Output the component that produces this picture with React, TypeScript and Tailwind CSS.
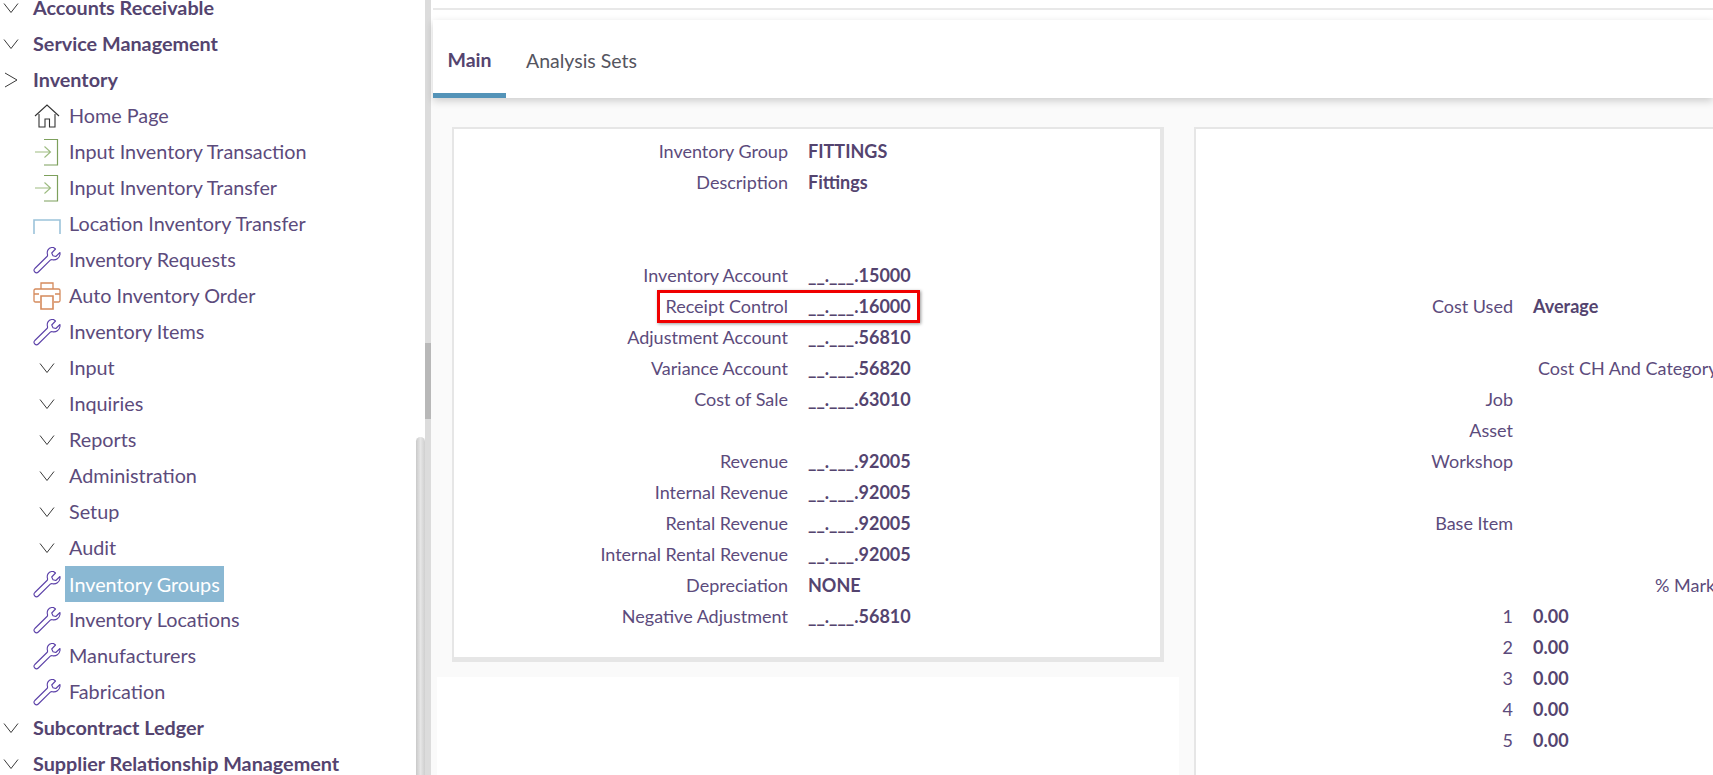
const purple = "text-[#5c4b7c]";

function Chevron({ open = true }: { open?: boolean }) {
  return (
    <svg width="16" height="16" viewBox="0 0 16 16" fill="none" stroke="#3a3a3a" strokeWidth="1">
      {open ? <path d="M1 3.500 L8 12.500 L15 3.500" /> : <path d="M2 1 L14 8 L2 15" />}
    </svg>
  );
}

function HomeIcon() {
  return (
    <svg width="28" height="28" viewBox="0 0 28 28" fill="none" stroke="#333" strokeWidth="1.100">
      <path d="M2 14 L14 3 L26 14 M6 12 V25 H12 V17 H16.500 V25 H22 V12" />
    </svg>
  );
}

function InputIcon() {
  return (
    <svg width="28" height="28" viewBox="0 0 28 28" fill="none">
      <path d="M11 1.500 H24.500 V27 H11" stroke="#7da05c" strokeWidth="1.200" />
      <path d="M2 14 H17 M11.500 8.500 L17.500 14 L11.500 19.500" stroke="#9dbb80" strokeWidth="1.100" />
    </svg>
  );
}

function LocationIcon() {
  return (
    <svg width="28" height="28" viewBox="0 0 28 28" fill="none" className="self-start mt-[13px]">
      <path d="M1 15 V1 H27 V15" stroke="#9cc3da" strokeWidth="1.600" />
    </svg>
  );
}

function WrenchIcon() {
  return (
    <svg width="28" height="28" viewBox="0 0 28 28" fill="none" stroke="#5b40a8" strokeWidth="1.100" strokeLinejoin="round">
      <path d="M18.500 1.500 C15.500 2 13.500 5 14.500 8.500 C14.700 9.300 14.500 10 14 10.500 L1.800 22.500 C0.700 23.700 0.800 25 1.800 26 C2.800 27 4.200 27.100 5.300 26 L17.300 14.200 C18 13.600 18.700 13.500 19.500 13.700 C23 14.500 26.500 12 27 8.500 L27 6.500 L22.800 10.500 L20 9.800 L18.700 7 L22.500 3 L20.500 1.500 Z" />
    </svg>
  );
}

function PrinterIcon() {
  return (
    <svg width="28" height="28" viewBox="0 0 28 28" fill="none" stroke="#d58a5c" strokeWidth="1.300">
      <path d="M8 7 V1 H20 V7" />
      <path d="M7 20 H2.500 C1.500 20 1 19.500 1 18.500 V8.500 C1 7.500 1.500 7 2.500 7 H25.500 C26.500 7 27 7.500 27 8.500 V18.500 C27 19.500 26.500 20 25.500 20 H21" />
      <path d="M1 12 H6 M22 12 H27" />
      <path d="M8 14 H20 V27 H8 Z" strokeWidth="1.600" />
    </svg>
  );
}

type NavRow = { label: string; icon: React.ReactNode; top?: boolean; active?: boolean };

const wrench = <WrenchIcon />;
const chevron = <Chevron />;

const navRows: NavRow[] = [
  { label: "Accounts Receivable", icon: chevron, top: true },
  { label: "Service Management", icon: chevron, top: true },
  { label: "Inventory", icon: <Chevron open={false} />, top: true },
  { label: "Home Page", icon: <HomeIcon /> },
  { label: "Input Inventory Transaction", icon: <InputIcon /> },
  { label: "Input Inventory Transfer", icon: <InputIcon /> },
  { label: "Location Inventory Transfer", icon: <LocationIcon /> },
  { label: "Inventory Requests", icon: wrench },
  { label: "Auto Inventory Order", icon: <PrinterIcon /> },
  { label: "Inventory Items", icon: wrench },
  { label: "Input", icon: chevron },
  { label: "Inquiries", icon: chevron },
  { label: "Reports", icon: chevron },
  { label: "Administration", icon: chevron },
  { label: "Setup", icon: chevron },
  { label: "Audit", icon: chevron },
  { label: "Inventory Groups", icon: wrench, active: true },
  { label: "Inventory Locations", icon: wrench },
  { label: "Manufacturers", icon: wrench },
  { label: "Fabrication", icon: wrench },
  { label: "Subcontract Ledger", icon: chevron, top: true },
  { label: "Supplier Relationship Management", icon: chevron, top: true },
];

function Sidebar() {
  return (
    <aside className="flex w-[431px] shrink-0 h-full overflow-hidden bg-white">
      <nav className="w-[416px] shrink-0 -mt-[10px]">
        {navRows.map((r) => (
          <div key={r.label} className="flex items-center h-9">
            {r.top ? (
              <>
                <span className="w-[33px] pl-[3px] flex items-center">{r.icon}</span>
                <span className="font-bold text-[19.800px] text-[#54446f] whitespace-nowrap">{r.label}</span>
              </>
            ) : (
              <>
                <span className="w-[65px] pl-[33px] pr-[4px] h-full flex items-center justify-center shrink-0">{r.icon}</span>
                <span
                  className={
                    r.active
                      ? "h-9 leading-9 px-[4px] bg-[#8ab8d3] text-white text-[19.800px] whitespace-nowrap"
                      : `px-[4px] text-[19.800px] ${purple} whitespace-nowrap`
                  }
                >
                  {r.label}
                </span>
              </>
            )}
          </div>
        ))}
      </nav>
      <div className="w-[9px] shrink-0 mt-[437px] rounded-t-[5px] bg-gradient-to-r from-[#c9c9c9] via-[#e6e6e6] to-[#cfcfcf]" />
      <div className="w-[6px] shrink-0 h-full bg-[#dcdcdc] pt-[343px]">
        <div className="h-[76px] bg-[#b8b8b8]" />
      </div>
    </aside>
  );
}

type Field = { label?: string; value?: string; plainClass?: string };

const leftFields: Field[] = [
  { label: "Inventory Group", value: "FITTINGS" },
  { label: "Description", value: "Fittings" },
  {},
  {},
  { label: "Inventory Account", value: "__.___.15000" },
  { label: "Receipt Control", value: "__.___.16000" },
  { label: "Adjustment Account", value: "__.___.56810" },
  { label: "Variance Account", value: "__.___.56820" },
  { label: "Cost of Sale", value: "__.___.63010" },
  {},
  { label: "Revenue", value: "__.___.92005" },
  { label: "Internal Revenue", value: "__.___.92005" },
  { label: "Rental Revenue", value: "__.___.92005" },
  { label: "Internal Rental Revenue", value: "__.___.92005" },
  { label: "Depreciation", value: "NONE" },
  { label: "Negative Adjustment", value: "__.___.56810" },
];

const rightFields: Field[] = [
  {},
  {},
  {},
  {},
  {},
  { label: "Cost Used", value: "Average" },
  {},
  { value: "Cost CH And Category", plainClass: "ml-[25px]" },
  { label: "Job" },
  { label: "Asset" },
  { label: "Workshop" },
  {},
  { label: "Base Item" },
  {},
  { value: "% Markup", plainClass: "ml-[142px]" },
  { label: "1", value: "0.00" },
  { label: "2", value: "0.00" },
  { label: "3", value: "0.00" },
  { label: "4", value: "0.00" },
  { label: "5", value: "0.00" },
];

function FieldRow({ f, labelWidth, boxed }: { f: Field; labelWidth: string; boxed?: boolean }) {
  return (
    <div className="relative flex h-[31px] items-center text-[18px] whitespace-nowrap">
      <span className={`${labelWidth} shrink-0 text-right ${purple}`}>{f.label}</span>
      {f.plainClass ? (
        <span className={`${f.plainClass} ${purple}`}>{f.value}</span>
      ) : (
        <span className="ml-5 font-bold text-[#54446f]">{f.value}</span>
      )}
      {boxed && (
        <div className="absolute left-[203px] top-[-1px] w-[263px] h-[33px] border-[3px] border-[#f00000] shadow-[1px_1px_3px_rgba(0,0,0,0.4)]" />
      )}
    </div>
  );
}

export default function App() {
  return (
    <div className="flex w-full h-screen overflow-hidden bg-white" style={{ fontFamily: "Lato, 'Liberation Sans', sans-serif" }}>
      <Sidebar />
      <main className="flex-1 min-w-0 flex flex-col bg-white">
        <div className="pt-2 pl-[2px] bg-white">
          <div className="h-[2px] bg-[#e8e8e8]" />
        </div>
        <div className="relative z-10 ml-[2px] mt-[10px] h-[78px] flex items-end gap-[5px] bg-white shadow-[0_3px_8px_rgba(0,0,0,0.18)]">
          <div className="h-full w-[73px] flex items-center justify-center border-b-[5px] border-[#5393b8] pt-[7px] font-bold text-[19.500px] text-[#54446f]">
            Main
          </div>
          <div className="h-full px-[15px] flex items-center pt-[3px] text-[19.500px] text-[#555560]">Analysis Sets</div>
        </div>
        <div className="flex-1 min-h-0 flex gap-[15px] pl-[6px] bg-[#fafafa] overflow-hidden">
          <div className="w-[742px] shrink-0 flex flex-col pt-[29px]">
            <div className="mx-[15px] h-[535px] bg-white border-l-2 border-t-2 border-r-[4px] border-b-[5px] border-[#e6e6e6] pt-[7px]">
              {leftFields.map((f, i) => (
                <FieldRow key={i} f={f} labelWidth="w-[334px]" boxed={f.label === "Receipt Control"} />
              ))}
            </div>
            <div className="mt-[15px] flex-1 bg-white" />
          </div>
          <div className="flex-1 min-w-0 mt-[29px] bg-white border-l-2 border-t-2 border-[#e6e6e6] pt-[7px] overflow-hidden">
            {rightFields.map((f, i) => (
              <FieldRow key={i} f={f} labelWidth="w-[317px]" />
            ))}
          </div>
        </div>
      </main>
    </div>
  );
}
